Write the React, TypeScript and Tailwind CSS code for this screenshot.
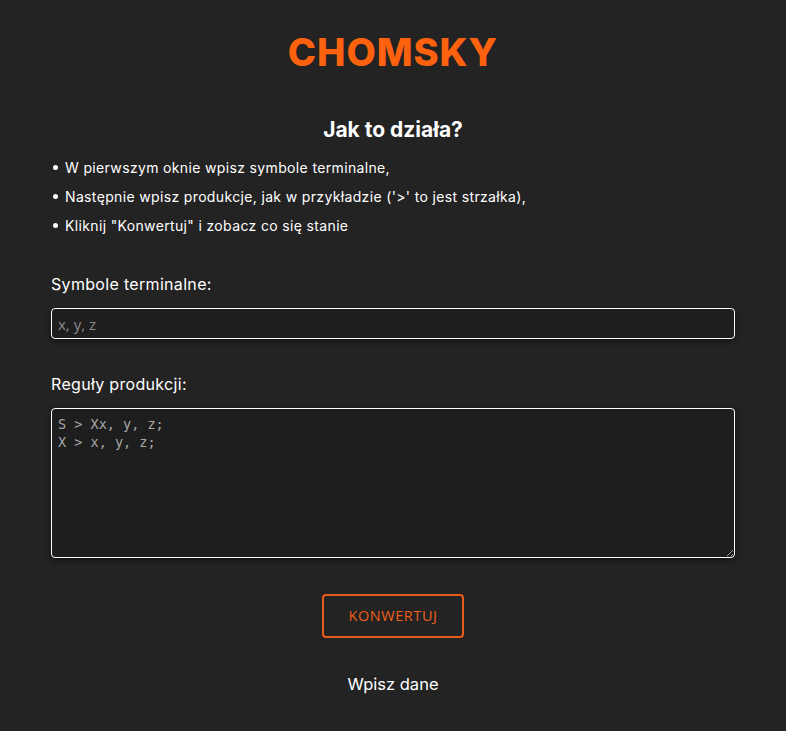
export default function App() {
  return (
    <div className="min-h-screen bg-[#232323] text-white font-['Inter',sans-serif]">
      <div className="mx-auto w-[684px] pt-[28px] pb-10">
        {/* Logo */}
        <h1 className="text-center text-[38px] leading-[48px] font-extrabold tracking-[0.025em] text-[#ff620f]">
          CHOMSKY
        </h1>

        {/* How it works */}
        <h2 className="mt-[40px] text-center text-[21px] leading-[28px] font-bold">Jak to działa?</h2>
        <ul className="mt-[9px] text-[14px] leading-[29px] tracking-[0.025em]">
          <li className="flex items-center gap-[7px] pl-[2px]">
            <span className="w-[5px] h-[5px] rounded-full bg-white" />
            W pierwszym oknie wpisz symbole terminalne,
          </li>
          <li className="flex items-center gap-[7px] pl-[2px]">
            <span className="w-[5px] h-[5px] rounded-full bg-white" />
            Następnie wpisz produkcje, jak w przykładzie ('&gt;' to jest strzałka),
          </li>
          <li className="flex items-center gap-[7px] pl-[2px]">
            <span className="w-[5px] h-[5px] rounded-full bg-white" />
            Kliknij "Konwertuj" i zobacz co się stanie
          </li>
        </ul>

        {/* Form */}
        <label className="block mt-[32px] text-[16px] leading-[24px] tracking-[0.02em]">Symbole terminalne:</label>
        <input
          type="text"
          placeholder="x, y, z"
          className="mt-[12px] block w-full h-[31px] px-[6px] rounded-[4px] border border-white bg-[#1e1e1e] shadow-[0_2px_6px_rgba(0,0,0,0.5)] text-[15px] font-['Open_Sans',sans-serif] placeholder:text-[#8a8a8a] outline-none"
        />

        <label className="block mt-[33px] text-[16px] leading-[24px] tracking-[0.02em]">Reguły produkcji:</label>
        <textarea
          defaultValue={"S > Xx, y, z;\nX > x, y, z;"}
          className="mt-[12px] block w-full h-[150px] px-[6px] py-[6px] rounded-[4px] border border-white bg-[#1e1e1e] shadow-[0_2px_6px_rgba(0,0,0,0.5)] text-[13.5px] leading-[18px] text-[#a8a8a8] font-['DejaVu_Sans_Mono',monospace] outline-none resize-y"
        />

        <div className="mt-[36px] flex justify-center">
          <button className="w-[142px] h-[44px] rounded-[4px] border-2 border-[#ea5c1c] text-[#ee5f18] text-[14.5px] tracking-[0.04em] font-['Open_Sans',sans-serif]">
            KONWERTUJ
          </button>
        </div>

        <p className="mt-[34px] text-center text-[16.5px] leading-[24px]">Wpisz dane</p>
      </div>
    </div>
  );
}
